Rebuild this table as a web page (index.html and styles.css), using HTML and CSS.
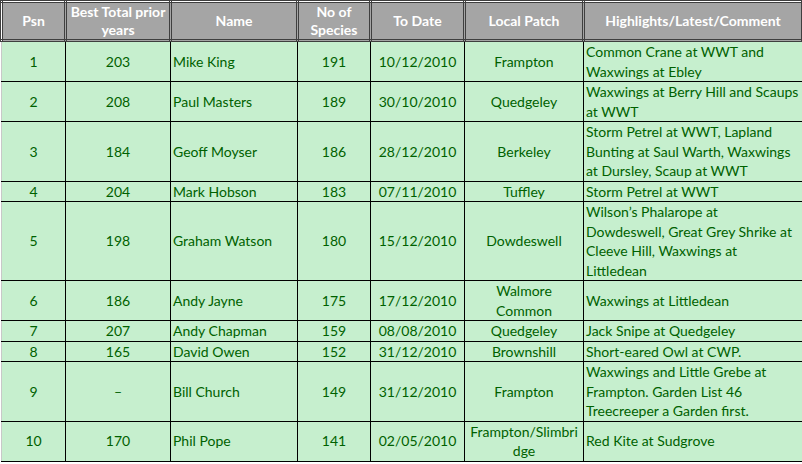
FILE: index.html
```html
<!DOCTYPE html>
<html>
<head>
<meta charset="utf-8">
<link rel="stylesheet" href="styles.css">
</head>
<body>
<table class="league">
  <colgroup>
    <col class="c-psn"><col class="c-best"><col class="c-name"><col class="c-no"><col class="c-date"><col class="c-patch"><col class="c-hl">
  </colgroup>
  <thead>
    <tr>
      <th>Psn</th>
      <th>Best Total prior<br>years</th>
      <th>Name</th>
      <th>No of<br>Species</th>
      <th>To Date</th>
      <th>Local Patch</th>
      <th>Highlights/Latest/Comment</th>
    </tr>
  </thead>
  <tbody>
    <tr>
      <td class="ctr">1</td><td class="ctr">203</td><td>Mike King</td><td class="ctr">191</td><td class="ctr">10/12/2010</td><td class="ctr">Frampton</td><td>Common Crane at WWT and<br>Waxwings at Ebley</td>
    </tr>
    <tr>
      <td class="ctr">2</td><td class="ctr">208</td><td>Paul Masters</td><td class="ctr">189</td><td class="ctr">30/10/2010</td><td class="ctr">Quedgeley</td><td>Waxwings at Berry Hill and Scaups<br>at WWT</td>
    </tr>
    <tr>
      <td class="ctr">3</td><td class="ctr">184</td><td>Geoff Moyser</td><td class="ctr">186</td><td class="ctr">28/12/2010</td><td class="ctr">Berkeley</td><td>Storm Petrel at WWT, Lapland<br>Bunting at Saul Warth, Waxwings<br>at Dursley, Scaup at WWT</td>
    </tr>
    <tr>
      <td class="ctr">4</td><td class="ctr">204</td><td>Mark Hobson</td><td class="ctr">183</td><td class="ctr">07/11/2010</td><td class="ctr">Tuffley</td><td>Storm Petrel at WWT</td>
    </tr>
    <tr>
      <td class="ctr">5</td><td class="ctr">198</td><td>Graham Watson</td><td class="ctr">180</td><td class="ctr">15/12/2010</td><td class="ctr">Dowdeswell</td><td>Wilson’s Phalarope at<br>Dowdeswell, Great Grey Shrike at<br>Cleeve Hill, Waxwings at<br>Littledean</td>
    </tr>
    <tr>
      <td class="ctr">6</td><td class="ctr">186</td><td>Andy Jayne</td><td class="ctr">175</td><td class="ctr">17/12/2010</td><td class="ctr">Walmore<br>Common</td><td>Waxwings at Littledean</td>
    </tr>
    <tr>
      <td class="ctr">7</td><td class="ctr">207</td><td>Andy Chapman</td><td class="ctr">159</td><td class="ctr">08/08/2010</td><td class="ctr">Quedgeley</td><td>Jack Snipe at Quedgeley</td>
    </tr>
    <tr>
      <td class="ctr">8</td><td class="ctr">165</td><td>David Owen</td><td class="ctr">152</td><td class="ctr">31/12/2010</td><td class="ctr">Brownshill</td><td>Short-eared Owl at CWP.</td>
    </tr>
    <tr>
      <td class="ctr">9</td><td class="ctr">–</td><td>Bill Church</td><td class="ctr">149</td><td class="ctr">31/12/2010</td><td class="ctr">Frampton</td><td>Waxwings and Little Grebe at<br>Frampton. Garden List 46<br>Treecreeper a Garden first.</td>
    </tr>
    <tr>
      <td class="ctr">10</td><td class="ctr">170</td><td>Phil Pope</td><td class="ctr">141</td><td class="ctr">02/05/2010</td><td class="ctr">Frampton/Slimbri<br>dge</td><td>Red Kite at Sudgrove</td>
    </tr>
  </tbody>
</table>
</body>
</html>
```

FILE: styles.css
```css
html, body {
  margin: 0;
  padding: 0;
  background: #ffffff;
}

.league {
  border-collapse: collapse;
  table-layout: fixed;
  width: 801px;
  font-family: Lato, "Open Sans", "Liberation Sans", sans-serif;
  font-size: 14px;
}

.c-psn { width: 64px; }
.c-best { width: 105px; }
.c-name { width: 127px; }
.c-no { width: 73px; }
.c-date { width: 94px; }
.c-patch { width: 119px; }
.c-hl { width: 219px; }

.league th {
  background: #a5a5a5;
  color: #ffffff;
  font-weight: bold;
  border: 3px double #3f3f3f;
  height: 36px;
  line-height: 18px;
  padding: 0 2px;
  text-align: center;
  vertical-align: middle;
  white-space: nowrap;
}

.league td {
  background: #c6efce;
  color: #006100;
  border: 1px solid #000000;
  line-height: 19.5px;
  padding: 0 2px;
  vertical-align: middle;
  white-space: nowrap;
  overflow: hidden;
}

.league td:first-child {
  border-left-color: #c8c8c8;
}

.league td.ctr {
  text-align: center;
  padding: 0 1px;
}
```
